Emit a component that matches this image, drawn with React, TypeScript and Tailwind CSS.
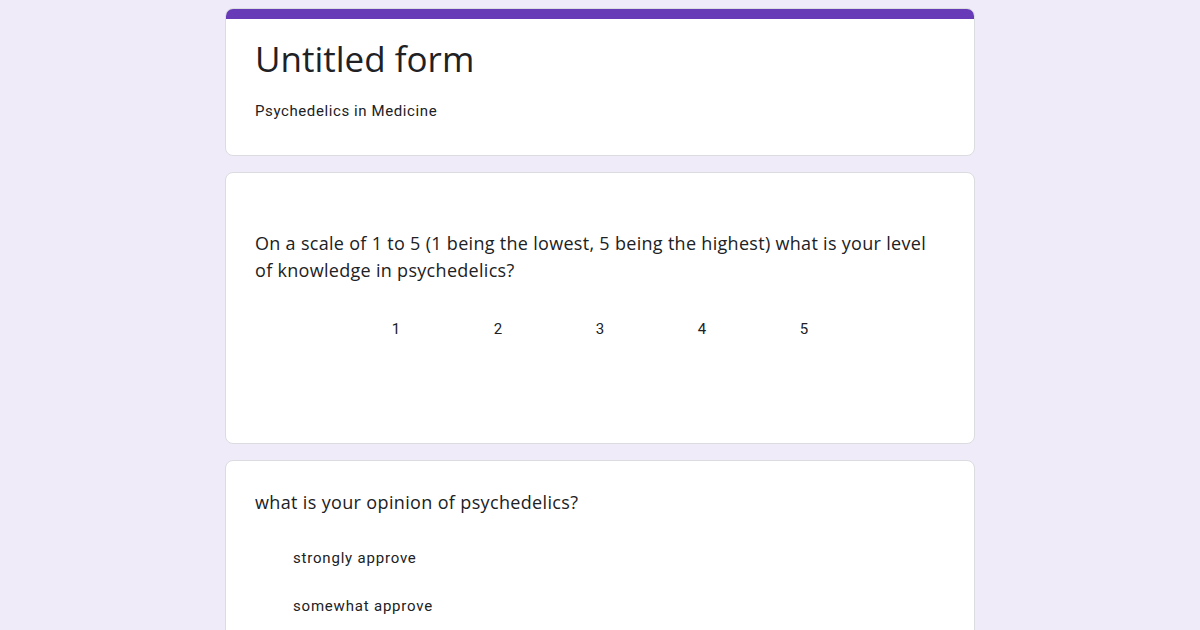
export default function App() {
  const scale = ['1', '2', '3', '4', '5']
  const options = ['strongly approve', 'somewhat approve']
  const heading = { fontFamily: '"Open Sans", Roboto, sans-serif' }

  return (
    <div className="h-[630px] overflow-hidden bg-[#f0ebf8] pt-2" style={{ fontFamily: 'Roboto, "Liberation Sans", sans-serif' }}>
      <div className="mx-auto flex w-[750px] flex-col gap-4">
        <div className="overflow-hidden rounded-lg border border-[#dadce0] bg-white">
          <div className="h-[10px] bg-[#673ab7]" />
          <div className="px-[29px] pb-[34px] pt-[16px]">
            <h1 className="text-[35px] leading-[48px] text-[#202124]" style={heading}>
              Untitled form
            </h1>
            <p className="mt-[18px] text-[15px] leading-5 tracking-[0.6px] text-[#202124]">Psychedelics in Medicine</p>
          </div>
        </div>

        <div className="rounded-lg border border-[#dadce0] bg-white px-[29px] pb-[104px] pt-[57px]">
          <p className="max-w-[680px] text-[18px] leading-[27px] tracking-[0.3px] text-[#202124]" style={heading}>
            On a scale of 1 to 5 (1 being the lowest, 5 being the highest) what is your level of knowledge in psychedelics?
          </p>
          <div className="mt-[35px] flex justify-center">
            {scale.map((n) => (
              <span key={n} className="w-[102px] text-center text-[15px] leading-5 text-[#202124]">
                {n}
              </span>
            ))}
          </div>
        </div>

        <div className="min-h-[220px] rounded-lg border border-[#dadce0] bg-white px-[29px] pt-[28px]">
          <p className="text-[18px] leading-[27px] tracking-[0.35px] text-[#202124]" style={heading}>
            what is your opinion of psychedelics?
          </p>
          <div className="mt-[32px] flex flex-col gap-[28px] pl-[38px]">
            {options.map((o) => (
              <span key={o} className="text-[15px] leading-5 tracking-[0.8px] text-[#202124]">
                {o}
              </span>
            ))}
          </div>
        </div>
      </div>
    </div>
  )
}
